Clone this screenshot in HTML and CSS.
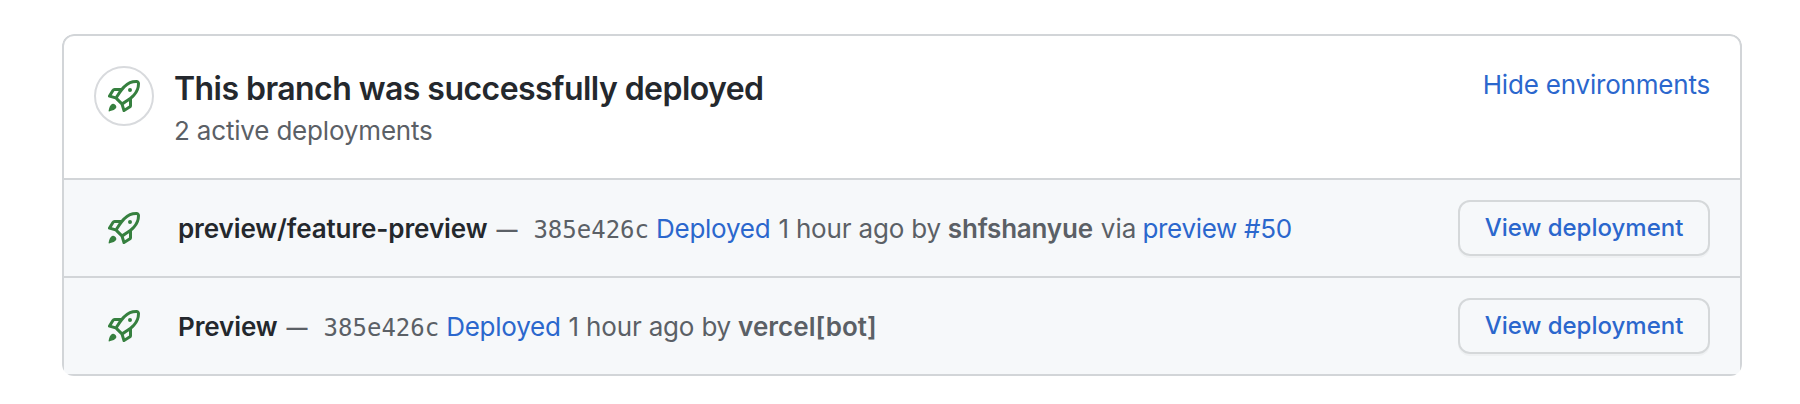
FILE: index.html
```html
<!DOCTYPE html>
<html lang="en">
<head>
<meta charset="utf-8">
<title>Deployments</title>
<link rel="stylesheet" href="styles.css">
</head>
<body>
<svg class="sprite" aria-hidden="true">
  <symbol id="rocket" viewBox="0 0 16 16"><path d="M14.064 0h.186C15.216 0 16 .784 16 1.75v.186a8.752 8.752 0 0 1-2.564 6.186l-.458.459c-.314.314-.641.616-.979.904v3.207c0 .608-.315 1.172-.833 1.49l-2.774 1.707a.749.749 0 0 1-1.11-.418l-.954-3.102a1.214 1.214 0 0 1-.145-.125L3.754 9.816a1.218 1.218 0 0 1-.124-.145L.528 8.717a.749.749 0 0 1-.418-1.11l1.71-2.774A1.748 1.748 0 0 1 3.31 4h3.204c.288-.338.59-.665.904-.979l.459-.458A8.749 8.749 0 0 1 14.064 0ZM8.938 3.623h-.002l-.458.458c-.76.76-1.437 1.598-2.02 2.5l-1.5 2.317 2.143 2.143 2.317-1.5c.902-.583 1.74-1.26 2.499-2.02l.459-.458a7.25 7.25 0 0 0 2.123-5.127V1.75a.25.25 0 0 0-.25-.25h-.186a7.249 7.249 0 0 0-5.125 2.123ZM3.56 14.56c-.732.732-2.334 1.045-3.005 1.148a.234.234 0 0 1-.201-.064.234.234 0 0 1-.064-.201c.103-.671.416-2.273 1.15-3.003a1.502 1.502 0 1 1 2.12 2.12Zm6.94-3.935c-.088.06-.177.118-.266.175l-2.35 1.521.548 1.783 1.949-1.2a.25.25 0 0 0 .119-.213ZM3.678 8.116 5.2 5.766c.058-.09.117-.178.176-.266H3.309a.25.25 0 0 0-.213.119l-1.2 1.95ZM12 5a1 1 0 1 1-2 0 1 1 0 0 1 2 0Z"/></symbol>
</svg>
<main class="panel">
  <header class="summary">
    <span class="badge"><svg class="rocket"><use href="#rocket"/></svg></span>
    <div class="heading">
      <h1 class="title">This branch was successfully deployed</h1>
      <p class="subtitle">2 active deployments</p>
    </div>
    <a class="link toggle">Hide environments</a>
  </header>
  <section class="row">
    <svg class="rocket"><use href="#rocket"/></svg>
    <p class="detail"><strong class="env">preview/feature-preview</strong><span class="dash">—</span><code class="sha">385e426c</code><a class="link deployed">Deployed</a><span class="time">1 hour ago by</span><strong class="user">shfshanyue</strong><span class="via">via</span><a class="link ref">preview #50</a></p>
    <a class="button">View deployment</a>
  </section>
  <section class="row">
    <svg class="rocket"><use href="#rocket"/></svg>
    <p class="detail"><strong class="env">Preview</strong><span class="dash">—</span><code class="sha">385e426c</code><a class="link deployed">Deployed</a><span class="time">1 hour ago by</span><strong class="user bot">vercel[bot]</strong></p>
    <a class="button">View deployment</a>
  </section>
</main>
</body>
</html>
```
FILE: styles.css
```css
* { box-sizing: border-box; }
body {
  margin: 0;
  padding: 34px 58px 0 62px;
  background: #fff;
  color: #5b6066;
  font: 26px/36px Inter, "Liberation Sans", sans-serif;
}
h1, p { margin: 0; }
.sprite { display: none; }
/* The border stays square at the bottom and is cut by the rounded clip. */
.panel {
  height: 342px;
  border: 2px solid #d2d5d8;
  border-radius: 12px 12px 0 0;
  clip-path: inset(0 round 12px);
}
.summary {
  display: flex;
  align-items: flex-start;
  height: 142px;
  padding: 30px 30px 0;
}
.badge {
  display: grid;
  place-items: center;
  width: 60px;
  height: 60px;
  border: 2px solid #d8dadd;
  border-radius: 50%;
}
.rocket {
  display: block;
  width: 32px;
  height: 32px;
  fill: #36803f;
}
.heading { flex: 1; padding: 1px 0 0 20px; }
.title {
  color: #24282d;
  font-size: 32px;
  font-weight: 600;
  letter-spacing: -.55px;
  line-height: 44px;
}
.subtitle { padding-top: 1px; letter-spacing: -.18px; line-height: 38px; }
.link { color: #2b67cd; letter-spacing: -.25px; }
.toggle { padding-top: 1px; letter-spacing: -.2px; }
.row {
  display: flex;
  align-items: center;
  height: 98px;
  padding: 0 30px 0 44px;
  border-top: 2px solid #d2d5d8;
  background: #f6f8fa;
}
.detail {
  display: flex;
  flex: 1;
  align-items: baseline;
  padding: 4px 0 0 38px;
  white-space: nowrap;
}
.env { color: #24282d; font-weight: 600; letter-spacing: -.1px; }
.dash { width: 26px; margin-left: 9px; font-size: 21px; font-weight: 600; transform: translateY(-1px); }
.sha { margin-left: 11px; font: 24px/36px "DejaVu Sans Mono", monospace; }
.deployed { margin-left: 7px; }
.time { margin-left: 8px; letter-spacing: -.18px; }
.user { margin-left: 7px; font-weight: 600; letter-spacing: -.2px; }
.bot { letter-spacing: .05px; }
.via { margin-left: 8px; }
.ref { margin-left: 6px; letter-spacing: -.3px; }
.button {
  width: 252px;
  height: 56px;
  border: 2px solid #d5d8da;
  border-radius: 12px;
  box-shadow: 0 2px 0 rgba(27, 31, 36, .03);
  color: #2b67cd;
  font-size: 24px;
  font-weight: 500;
  line-height: 52px;
  text-align: center;
}
```
